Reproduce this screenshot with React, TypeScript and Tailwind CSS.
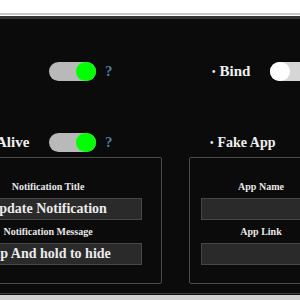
import React from "react";

function Toggle({ on }: { on: boolean }) {
  return (
    <div
      className={
        on
          ? "flex h-[19px] w-[47px] shrink-0 justify-end rounded-full bg-[#b9b9b9]"
          : "flex h-[19px] w-[47px] shrink-0 justify-start rounded-full bg-[#d6d6d6]"
      }
    >
      <div
        className={
          on
            ? "h-[19px] w-[20px] rounded-full bg-[#00ff00]"
            : "h-[19px] w-[20px] rounded-full bg-white"
        }
      />
    </div>
  );
}

function Help() {
  return (
    <span className="ml-[9px] text-[15px] font-bold leading-none text-[#4d7fa3]">
      ?
    </span>
  );
}

function Field({ label, value }: { label: string; value?: string }) {
  return (
    <div className="flex flex-col items-center">
      <span className="text-[10px] font-bold leading-[12px] text-[#e8e8e8]">
        {label}
      </span>
      <input
        readOnly
        value={value ?? ""}
        className="mt-[5px] h-[22px] w-full border border-[#474747] bg-[#2a2a2a] text-center text-[14px] font-bold text-[#ececec] outline-none"
      />
    </div>
  );
}

export default function App() {
  return (
    <div
      className="flex h-[300px] w-[300px] flex-col overflow-hidden bg-white"
      style={{ fontFamily: '"Liberation Serif", "DejaVu Serif", serif' }}
    >
      <div className="h-[13px] bg-white" />
      <div className="h-[2px] bg-[#c8c8c8]" />
      <div className="h-[1px] bg-white" />
      <div className="h-[3px] bg-[#343434]" />

      {/* main area */}
      <div className="flex h-[276px] flex-col bg-[#0b0b0b] pt-[43px]">
        <div className="flex h-[19px] items-center">
          <div className="flex w-[212px] shrink-0 items-center pl-[49px]">
            <Toggle on />
            <Help />
          </div>
          <div className="flex shrink-0 items-center text-[15px] font-bold text-[#f0f0f0]">
            <span className="mr-[4px] text-[10px]">•</span>
            <span>Bind</span>
            <div className="ml-[20px]">
              <Toggle on={false} />
            </div>
          </div>
        </div>

        <div className="mt-[52px] flex h-[19px] items-center">
          <div className="flex w-[210px] shrink-0 items-center">
            <span className="-ml-[4px] w-[31px] text-right text-[15px] font-bold text-[#f0f0f0]">
              Alive
            </span>
            <div className="ml-[22px]">
              <Toggle on />
            </div>
            <Help />
          </div>
          <div className="flex shrink-0 items-center text-[14px] font-bold text-[#f0f0f0]">
            <span className="mr-[4px] text-[10px]">•</span>
            <span>Fake App</span>
          </div>
        </div>

        <div className="mt-[5px] -ml-[66px] flex gap-[27px]">
          <div className="w-[228px] shrink-0 rounded-[2px] border border-[#4a4a4a] px-[19px] pb-[18px] pt-[23px]">
            <Field label="Notification Title" value="Update Notification" />
            <div className="mt-[6px]">
              <Field label="Notification Message" value="Tap And hold to hide" />
            </div>
          </div>
          <div className="w-[144px] shrink-0 rounded-[2px] border border-[#4a4a4a] px-[11px] pb-[18px] pt-[23px]">
            <Field label="App Name" />
            <div className="mt-[6px]">
              <Field label="App Link" />
            </div>
          </div>
        </div>

        <div className="flex-1" />
        <div className="h-[1px] bg-[#3c3c3c]" />
        <div className="h-[1px] bg-[#111]" />
      </div>
      <div className="flex-1 bg-[#d2d2d2]" />
    </div>
  );
}
